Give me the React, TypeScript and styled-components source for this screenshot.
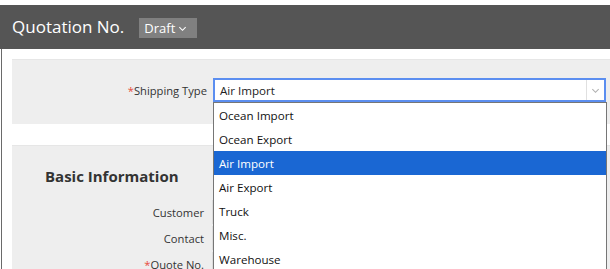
import React from "react";
import styled, { createGlobalStyle } from "styled-components";

const Global = createGlobalStyle`
  html, body { margin: 0; padding: 0; background: #fff; overflow: hidden; }
  body { font-family: "Open Sans", "Noto Sans", sans-serif; color: #333; }
  * { box-sizing: border-box; }
`;

const Page = styled.div`
  padding-top: 5px;
  height: 269px;
  display: flex;
  flex-direction: column;
`;

const Header = styled.header`
  height: 44px;
  background: #555555;
  display: flex;
  align-items: center;
  padding-left: 12px;
  gap: 15px;
  flex-shrink: 0;
`;

const Title = styled.h1`
  margin: 0;
  font-size: 17px;
  font-weight: 400;
  color: #fff;
  line-height: 1;
  position: relative;
  top: -1px;
`;

const StatusBadge = styled.button`
  all: unset;
  display: flex;
  align-items: center;
  gap: 3px;
  height: 20px;
  padding: 0 10px 0 5px;
  background: #808080;
  color: #fff;
  font-family: "Open Sans", sans-serif;
  font-size: 13px;
  position: relative;
  top: 1px;
`;

const Body = styled.main`
  flex: 1;
  margin-left: 1px;
  border-left: 1px solid #6a6a6a;
  padding: 10px 0 0 10px;
  display: flex;
  flex-direction: column;
  gap: 21px;
`;

const Panel = styled.section<{ $pad?: string }>`
  background: #eeeeee;
  border-top: 1px solid #e6e6e6;
  padding: ${(p) => p.$pad || "0"};
  display: flex;
  flex-direction: column;
`;

const Fields = styled.div`
  display: flex;
  flex-direction: column;
  padding-top: 7px;
`;

const Row = styled.div<{ $h?: number; $labelW?: number; $gap?: number }>`
  display: grid;
  grid-template-columns: ${(p) => p.$labelW || 195}px 1fr;
  column-gap: ${(p) => p.$gap || 6}px;
  align-items: center;
  height: ${(p) => p.$h || 26}px;
  padding-right: 4px;
`;

const Label = styled.label`
  text-align: right;
  font-size: 11.2px;
  color: #333;
  white-space: nowrap;
`;

const Req = styled.span`
  color: #e74c3c;
`;

const SelectWrap = styled.div`
  position: relative;
  height: 24px;
`;

const SelectBox = styled.div`
  height: 24px;
  border: 2px solid #5b8ef0;
  background: #fff;
  display: flex;
  align-items: center;
  font-size: 11.6px;
  color: #222;
`;

const SelectValue = styled.span`
  flex: 1;
  padding-left: 5px;
`;

const Arrow = styled.span`
  width: 18px;
  align-self: stretch;
  border-left: 1px solid #e0e0e0;
  display: flex;
  align-items: center;
  justify-content: center;
  color: #aaa;
`;

const Menu = styled.ul`
  position: absolute;
  top: 24px;
  left: 0;
  right: -1px;
  margin: 0;
  padding: 0;
  list-style: none;
  background: #fff;
  border: 1px solid #767676;
  z-index: 10;
`;

const Option = styled.li<{ $active?: boolean }>`
  height: 24px;
  display: flex;
  align-items: center;
  padding-left: 5px;
  font-size: 11.6px;
  color: ${(p) => (p.$active ? "#fff" : "#111")};
  background: ${(p) => (p.$active ? "#1a67d3" : "#fff")};
`;

const SectionTitle = styled.h2`
  margin: 0;
  padding-left: 33px;
  height: 32px;
  display: flex;
  align-items: center;
  font-size: 15px;
  font-weight: 700;
  color: #333;
`;

const Input = styled.div`
  height: 24px;
  background: #fff;
  border: 1px solid #dcdcdc;
`;

const Chevron = ({ size, color }: { size: number; color: string }) => (
  <svg width={size} height={size} viewBox="0 0 10 10" fill="none">
    <path d="M1.5 3.5 L5 7 L8.5 3.5" stroke={color} strokeWidth="1.2" />
  </svg>
);

const options = ["Ocean Import", "Ocean Export", "Air Import", "Air Export", "Truck", "Misc.", "Warehouse", "Courier"];

export default function App() {
  return (
    <>
      <Global />
      <Page>
        <Header>
          <Title>Quotation No.</Title>
          <StatusBadge>
            Draft
            <Chevron size={9} color="#fff" />
          </StatusBadge>
        </Header>
        <Body>
          <Panel $pad="18px 0 22px">
            <Row $h={24}>
              <Label>
                <Req>*</Req>Shipping Type
              </Label>
              <SelectWrap>
                <SelectBox>
                  <SelectValue>Air Import</SelectValue>
                  <Arrow>
                    <Chevron size={9} color="#b0b0b0" />
                  </Arrow>
                </SelectBox>
                <Menu>
                  {options.map((o) => (
                    <Option key={o} $active={o === "Air Import"}>
                      {o}
                    </Option>
                  ))}
                </Menu>
              </SelectWrap>
            </Row>
          </Panel>
          <Panel $pad="14px 0 0">
            <SectionTitle>Basic Information</SectionTitle>
            <Fields>
              <Row $labelW={192} $gap={8}>
                <Label>Customer</Label>
                <Input />
              </Row>
              <Row $labelW={192} $gap={8}>
                <Label>Contact</Label>
                <Input />
              </Row>
              <Row $labelW={192} $gap={8}>
                <Label>
                  <Req>*</Req>Quote No.
                </Label>
                <Input />
              </Row>
            </Fields>
          </Panel>
        </Body>
      </Page>
    </>
  );
}
